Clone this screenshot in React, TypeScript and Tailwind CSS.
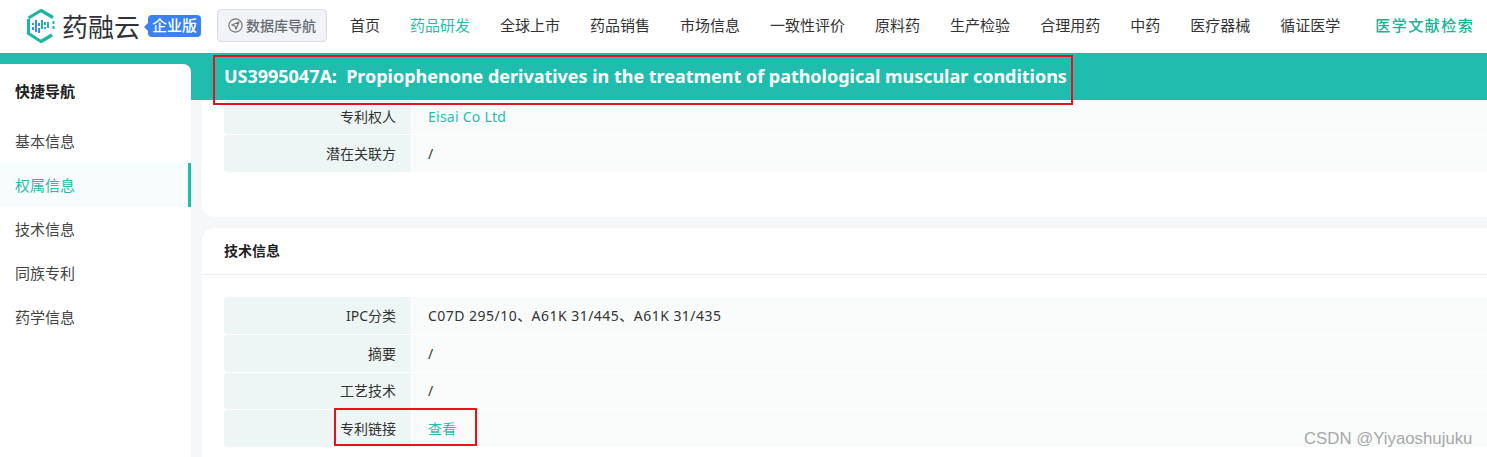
const navItems = [
  "首页",
  "药品研发",
  "全球上市",
  "药品销售",
  "市场信息",
  "一致性评价",
  "原料药",
  "生产检验",
  "合理用药",
  "中药",
  "医疗器械",
  "循证医学",
];

const sideItems = ["基本信息", "权属信息", "技术信息", "同族专利", "药学信息"];

function Logo() {
  return (
    <svg width="30" height="36" viewBox="0 0 30 36" fill="none">
      <path
        d="M2.5 11 L2.5 25.5 L15 33.5 L26 27 M27 9.5 L15 2.5 L2.5 10"
        stroke="#1fb5a6"
        strokeWidth="3.2"
        strokeLinejoin="round"
      />
      <path d="M27.5 13v10" stroke="#1fb5a6" strokeWidth="2" strokeDasharray="3 2" />
      <path d="M7 15v2M7 19v3M10 12v12M13 15v3M13 20v5" stroke="#3b8ef0" strokeWidth="2" />
      <path d="M16 12v9M19 14v3M19 19v2M22 14v6" stroke="#1fb5a6" strokeWidth="2" />
    </svg>
  );
}

function NavIcon() {
  return (
    <svg width="15" height="15" viewBox="0 0 15 15" fill="none" stroke="#777" strokeWidth="1.2">
      <circle cx="7.5" cy="7.5" r="6.6" />
      <path d="M11 4 L3.8 7 L7 8 L8 11.2 Z" strokeLinejoin="round" />
    </svg>
  );
}

function Row({
  label,
  children,
  h,
}: {
  label: string;
  children: React.ReactNode;
  h: string;
}) {
  return (
    <div className={`flex ${h} gap-px overflow-hidden rounded text-sm text-[#333]`}>
      <div className="flex w-[187px] items-center justify-end bg-[#eef6f5] pr-[15px]">
        {label}
      </div>
      <div className="flex flex-1 items-center bg-[#f9fbfb] pl-4">{children}</div>
    </div>
  );
}

export default function App() {
  return (
    <div className="relative h-[457px] w-[1487px] overflow-hidden bg-[#f6f7f9] font-['Noto_Sans','Noto_Sans_CJK_SC',sans-serif]">
      <header className="flex h-[53px] items-center bg-white pb-[2px] pl-[26px]">
        <Logo />
        <span className="ml-[6px] w-[80px] font-['Noto_Sans_CJK_SC',sans-serif] text-[26px] leading-none font-normal text-[#2f3338]">
          药融云
        </span>
        <span className="relative ml-[6px] flex h-[22px] w-[53px] items-center justify-center rounded bg-[#3b82f0] text-[15px] font-medium text-white">
          <span className="absolute top-[8px] left-[-4px] h-0 w-0 border-y-[4px] border-r-[4px] border-y-transparent border-r-[#3b82f0]" />
          企业版
        </span>
        <button className="ml-4 flex h-[33px] w-[110px] items-center justify-center gap-[3px] rounded border border-[#d8dce6] bg-[#f1f3f7] text-[14px] font-medium text-[#666c75]">
          <NavIcon />
          数据库导航
        </button>
        <nav className="ml-[23px] flex gap-[30px] text-[15px] text-[#333]">
          {navItems.map((item) => (
            <span
              key={item}
              className={item === "药品研发" ? "text-[#1fbdae]" : ""}
            >
              {item}
            </span>
          ))}
        </nav>
        <span className="ml-[35px] text-[15px] font-medium tracking-[1.5px] text-[#10b592]">
          医学文献检索
        </span>
      </header>

      <div className="flex">
        <aside className="w-[191px] shrink-0 bg-[linear-gradient(#1fbdae_30px,#f6f7f9_30px)]">
          <div className="mt-[11px] h-[393px] rounded-tr-lg bg-white">
            <div className="flex h-[55px] items-center pl-[15px] text-[15px] font-bold text-[#222]">
              快捷导航
            </div>
            {sideItems.map((item) => (
              <div
                key={item}
                className={
                  item === "权属信息"
                    ? "flex h-11 items-center border-r-[3px] border-[#1fbdae] bg-[#f7fcfc] pl-[15px] text-[15px] text-[#1fbdae]"
                    : "flex h-11 items-center pl-[15px] text-[15px] text-[#444]"
                }
              >
                {item}
              </div>
            ))}
          </div>
        </aside>

        <main className="min-w-0 flex-1">
          <div className="flex h-[47px] items-center bg-[#1fbdae] pl-[33px] text-[18px] font-bold tracking-[-0.02px] text-white">
            US3995047A:&nbsp;&nbsp;Propiophenone derivatives in the treatment of pathological muscular conditions
          </div>

          <div className="mr-[-20px] ml-[11px]">
            <section className="rounded-b-xl bg-white pb-[45px] pl-[22px]">
              <div className="flex flex-col gap-px">
                <Row label="专利权人" h="h-[34px]">
                  <span className="tracking-[0.25px] text-[#1fbdae]">Eisai Co Ltd</span>
                </Row>
                <Row label="潜在关联方" h="h-[37px]">
                  /
                </Row>
              </div>
            </section>

            <section className="mt-[11px] rounded-t-xl bg-white pb-[20px]">
              <div className="flex h-[47px] items-center border-b border-[#ebedf0] pl-[22px] text-sm font-bold text-[#222]">
                技术信息
              </div>
              <div className="flex flex-col gap-px pt-[22px] pl-[22px]">
                <Row label="IPC分类" h="h-[37px]">
                  <span className="tracking-[0.47px]">C07D 295/10、A61K 31/445、A61K 31/435</span>
                </Row>
                <Row label="摘要" h="h-[37px]">
                  /
                </Row>
                <Row label="工艺技术" h="h-[36px]">
                  /
                </Row>
                <Row label="专利链接" h="h-[37px]">
                  <span className="text-[#1fbdae]">查看</span>
                </Row>
              </div>
            </section>
          </div>
        </main>
      </div>

      {/* red annotation boxes drawn over the screenshot */}
      <div className="pointer-events-none absolute top-[55px] left-[213px] h-[50px] w-[860px] border-2 border-[#e8131a]" />
      <div className="pointer-events-none absolute top-[408px] left-[334px] h-[38px] w-[143px] border-2 border-[#e8131a]" />

      <span className="absolute top-[426px] left-[1304px] font-['Liberation_Sans',sans-serif] text-[16.8px] text-[#a8a8a8]">
        CSDN @Yiyaoshujuku
      </span>
    </div>
  );
}
